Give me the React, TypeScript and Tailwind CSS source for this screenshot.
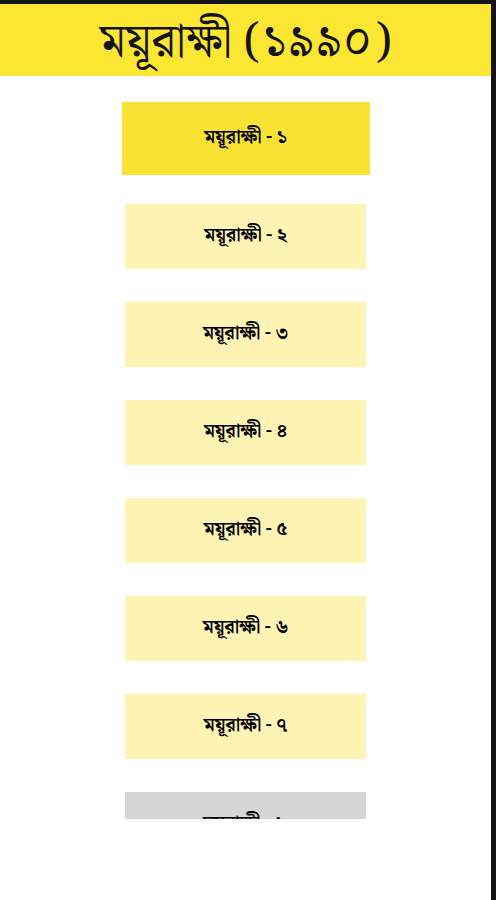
const bn = '"Noto Serif Bengali", "Noto Sans Bengali", "Lohit Bengali", "Kalpurush", "SolaimanLipi", serif'

const digits = ['১', '২', '৩', '৪', '৫', '৬', '৭', '৮']

export default function App() {
  return (
    <div className="flex h-[900px] w-[496px] flex-col overflow-hidden border-t-4 border-r-[5px] border-[#141414] bg-white">
      <header className="flex h-[72px] shrink-0 items-center justify-center bg-[#fbe631] pt-[6px]">
        <h1 className="text-[48px] leading-none text-[#141414]" style={{ fontFamily: bn }}>
          ময়ূরাক্ষী (১৯৯০)
        </h1>
      </header>

      <ul className="flex h-[743px] shrink-0 flex-col overflow-hidden pt-[13px]">
        {digits.map((d, i) => (
          <li key={d} className="flex h-[98px] shrink-0 items-center justify-center">
            <button
              type="button"
              className={
                i === 0
                  ? 'flex h-[73px] w-[248px] items-center justify-center bg-[#f9e234] text-[19px] font-bold tracking-[-0.01em] text-black'
                  : i === 7
                    ? 'flex h-[65px] w-[241px] items-center justify-center bg-[#d6d6d6] text-[19px] font-bold tracking-[-0.01em] text-black'
                    : 'flex h-[65px] w-[241px] items-center justify-center bg-[#fdf3b3] text-[19px] font-bold tracking-[-0.01em] text-black'
              }
              style={{ fontFamily: bn }}
            >
              ময়ূরাক্ষী - {d}
            </button>
          </li>
        ))}
      </ul>
    </div>
  )
}
